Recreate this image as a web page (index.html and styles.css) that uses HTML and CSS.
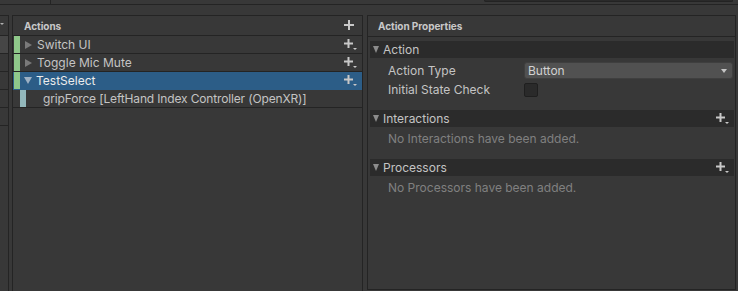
FILE: index.html
```html
<!DOCTYPE html>
<html>
<head>
<meta charset="utf-8">
<link rel="stylesheet" href="styles.css">
</head>
<body>
<div class="top">
  <div class="tab"></div>
  <div class="search"></div>
</div>
<div class="main">
  <div class="leftcol">
    <div class="lhead"><span class="lcut"></span></div>
    <div class="lrow sel"></div>
    <div class="lrow"></div>
    <div class="lrow"></div>
    <div class="lrow"></div>
    <div class="lrow"></div>
  </div>
  <div class="panel actions">
    <div class="phead">
      <span class="ptitle">Actions</span>
      <svg class="plus" width="11" height="10" viewBox="0 0 11 10"><rect x="0" y="4" width="10" height="2"/><rect x="4" y="0" width="2" height="10"/></svg>
    </div>
    <div class="row">
      <span class="mark green"></span>
      <span class="tri right"></span>
      <span class="label">Switch UI</span>
      <svg class="plusdd" width="13" height="11" viewBox="0 0 13 11"><rect x="0" y="3.5" width="9" height="2"/><rect x="3.5" y="0" width="2" height="9"/><polygon points="9,9 13,9 11,11"/></svg>
    </div>
    <div class="row">
      <span class="mark green"></span>
      <span class="tri right"></span>
      <span class="label">Toggle Mic Mute</span>
      <svg class="plusdd" width="13" height="11" viewBox="0 0 13 11"><rect x="0" y="3.5" width="9" height="2"/><rect x="3.5" y="0" width="2" height="9"/><polygon points="9,9 13,9 11,11"/></svg>
    </div>
    <div class="row selected">
      <span class="mark green"></span>
      <span class="tri down"></span>
      <span class="label">TestSelect</span>
      <svg class="plusdd" width="13" height="11" viewBox="0 0 13 11"><rect x="0" y="3.5" width="9" height="2"/><rect x="3.5" y="0" width="2" height="9"/><polygon points="9,9 13,9 11,11"/></svg>
    </div>
    <div class="row binding">
      <span class="mark teal"></span>
      <span class="label">gripForce [LeftHand Index Controller (OpenXR)]</span>
    </div>
  </div>
  <div class="panel props">
    <div class="phead tall">
      <span class="ptitle">Action Properties</span>
    </div>
    <div class="section first">
      <span class="stri"></span><span class="stitle">Action</span>
    </div>
    <div class="field type">
      <span class="flabel">Action Type</span>
      <div class="dropdown"><span>Button</span><span class="ddarrow"></span></div>
    </div>
    <div class="field">
      <span class="flabel">Initial State Check</span>
      <span class="checkbox"></span>
    </div>
    <div class="section interactions">
      <span class="stri"></span><span class="stitle">Interactions</span>
      <svg class="plusdd" width="13" height="11" viewBox="0 0 13 11"><rect x="0" y="3.5" width="9" height="2"/><rect x="3.5" y="0" width="2" height="9"/><polygon points="9,9 13,9 11,11"/></svg>
    </div>
    <div class="empty">No Interactions have been added.</div>
    <div class="section processors">
      <span class="stri"></span><span class="stitle">Processors</span>
      <svg class="plusdd" width="13" height="11" viewBox="0 0 13 11"><rect x="0" y="3.5" width="9" height="2"/><rect x="3.5" y="0" width="2" height="9"/><polygon points="9,9 13,9 11,11"/></svg>
    </div>
    <div class="empty">No Processors have been added.</div>
  </div>
</div>
</body>
</html>
```

FILE: styles.css
```css
html, body {
  margin: 0;
  padding: 0;
  background: #383838;
  width: 738px;
  height: 291px;
  overflow: hidden;
  font-family: Inter, "Noto Sans", sans-serif;
  font-size: 12px;
  color: #c4c4c4;
}

.top {
  height: 4px;
  border-bottom: 1px solid #242424;
  display: flex;
}
.tab {
  width: 50px;
  border-right: 1px solid #242424;
}
.search {
  margin-left: 433px;
  width: 247px;
  height: 1px;
  border: 1px solid #232323;
  border-top: none;
  border-radius: 0 0 3px 3px;
  background: #2a2a2a;
}

.main {
  display: flex;
  margin-top: 10px;
  height: 276px;
  overflow: hidden;
}

.leftcol {
  width: 8px;
  border-right: 1px solid #242424;
  border-top: 1px solid #242424;
  height: 300px;
}
.lhead {
  height: 19px;
  border-bottom: 1px solid #242424;
  position: relative;
}
.lcut {
  position: absolute;
  left: 0;
  top: 7px;
  width: 0;
  height: 0;
  border-left: 2px solid transparent;
  border-right: 2px solid transparent;
  border-top: 2px solid #b0b0b0;
}
.lrow {
  height: 17px;
  border-bottom: 1px solid #242424;
}
.lrow.sel {
  background: #464646;
}

.panel {
  border: 1px solid #242424;
  background: #383838;
}
.actions {
  margin-left: 3px;
  width: 349px;
  height: 300px;
  border-bottom: none;
}
.props {
  margin-left: 4px;
  width: 367px;
  height: 273px;
}

.phead {
  height: 19px;
  border-bottom: 1px solid #242424;
  display: flex;
  align-items: center;
  padding-left: 11px;
  padding-right: 7px;
}
.phead.tall {
  height: 20px;
  padding-left: 10px;
}
.ptitle {
  font-weight: 700;
  font-size: 10px;
  letter-spacing: -0.05px;
  flex: 1;
  color: #c8c8c8;
}
.plus {
  fill: #c8c8c8;
  margin-top: -2px;
}

.row {
  height: 17px;
  border-bottom: 1px solid #242424;
  display: flex;
  align-items: center;
  padding-right: 5px;
  color: #c4c4c4;
}
.row.selected {
  background: #2c5d87;
  border-bottom-color: #2c5d87;
  color: #ececec;
}
.mark {
  width: 6px;
  height: 17px;
  margin-left: 1px;
  flex: none;
}
.mark.green {
  background: #8fc88a;
}
.mark.teal {
  background: #93b8bc;
  margin-left: 7px;
}
.tri {
  width: 0;
  height: 0;
  margin-left: 5px;
  margin-right: 5px;
  flex: none;
}
.tri.right {
  border-top: 4px solid transparent;
  border-bottom: 4px solid transparent;
  border-left: 7px solid #7a7a7a;
}
.tri.down {
  border-left: 4px solid transparent;
  border-right: 4px solid transparent;
  border-top: 7px solid #9db1c4;
  margin-left: 4px;
  margin-right: 4px;
}
.label {
  flex: 1;
  white-space: nowrap;
}
.binding .label {
  margin-left: 17px;
  letter-spacing: -0.15px;
}
.plusdd {
  fill: #c8c8c8;
  flex: none;
}

.section {
  height: 17px;
  margin: 0 1px 0 2px;
  background: #2b2b2b;
  display: flex;
  align-items: center;
  padding-right: 5px;
}
.section.first {
  margin-top: 4px;
}
.section.interactions {
  margin-top: 11px;
}
.section.processors {
  margin-top: 12px;
}
.stri {
  width: 0;
  height: 0;
  border-left: 3.5px solid transparent;
  border-right: 3.5px solid transparent;
  border-top: 7px solid #8c8c8c;
  margin-left: 3px;
  margin-right: 4px;
}
.stitle {
  flex: 1;
  font-size: 12px;
  color: #c4c4c4;
}

.field {
  display: flex;
  align-items: center;
  height: 19px;
  padding-left: 20px;
}
.field.type {
  margin-top: 3px;
}
.flabel {
  width: 136px;
  flex: none;
}
.dropdown {
  width: 199px;
  height: 15px;
  background: #515151;
  border: 1px solid #3f3f3f;
  border-radius: 3px;
  display: flex;
  align-items: center;
  justify-content: space-between;
  padding: 0 5px 0 3px;
  color: #d2d2d2;
}
.ddarrow {
  width: 0;
  height: 0;
  border-left: 3px solid transparent;
  border-right: 3px solid transparent;
  border-top: 4px solid #c4c4c4;
}
.checkbox {
  width: 12px;
  height: 12px;
  background: #2a2a2a;
  border: 1px solid #1f1f1f;
  border-radius: 2px;
}

.empty {
  padding-left: 20px;
  margin-top: 4px;
  color: #808080;
  height: 16px;
  line-height: 16px;
}
```
